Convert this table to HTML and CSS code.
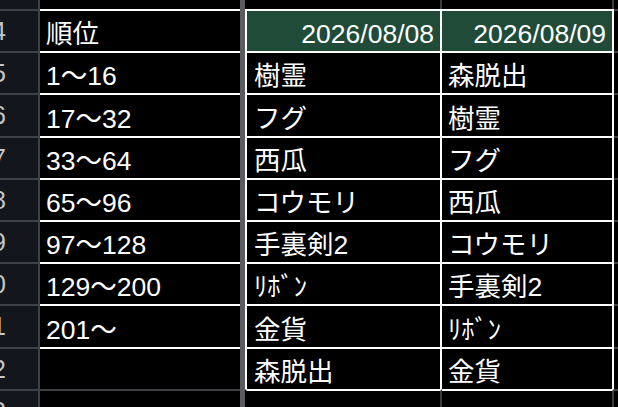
FILE: index.html
```html
<!DOCTYPE html>
<html lang="ja">
<head>
<meta charset="utf-8">
<title>Sheet</title>
<link rel="stylesheet" href="styles.css">
</head>
<body>
<div class="sheet">
  <div class="row edge top">
    <div class="hdr"></div>
    <div class="ca"></div><div class="sep"></div><div class="cb"></div><div class="cc"></div><div class="cd"></div>
  </div>
  <div class="row data">
    <div class="hdr"><span>14</span></div>
    <div class="ca">順位</div><div class="sep"></div>
    <div class="cb head">2026/08/08</div><div class="cc head">2026/08/09</div><div class="cd"></div>
  </div>
  <div class="row data">
    <div class="hdr"><span>15</span></div>
    <div class="ca">1〜16</div><div class="sep"></div>
    <div class="cb">樹霊</div><div class="cc">森脱出</div><div class="cd"></div>
  </div>
  <div class="row data">
    <div class="hdr"><span>16</span></div>
    <div class="ca">17〜32</div><div class="sep"></div>
    <div class="cb">フグ</div><div class="cc">樹霊</div><div class="cd"></div>
  </div>
  <div class="row data">
    <div class="hdr"><span>17</span></div>
    <div class="ca">33〜64</div><div class="sep"></div>
    <div class="cb">西瓜</div><div class="cc">フグ</div><div class="cd"></div>
  </div>
  <div class="row data">
    <div class="hdr"><span>18</span></div>
    <div class="ca">65〜96</div><div class="sep"></div>
    <div class="cb">コウモリ</div><div class="cc">西瓜</div><div class="cd"></div>
  </div>
  <div class="row data">
    <div class="hdr"><span>19</span></div>
    <div class="ca">97〜128</div><div class="sep"></div>
    <div class="cb">手裏剣2</div><div class="cc">コウモリ</div><div class="cd"></div>
  </div>
  <div class="row data">
    <div class="hdr"><span>20</span></div>
    <div class="ca">129〜200</div><div class="sep"></div>
    <div class="cb">ﾘﾎﾞﾝ</div><div class="cc">手裏剣2</div><div class="cd"></div>
  </div>
  <div class="row data">
    <div class="hdr"><span>21</span></div>
    <div class="ca">201〜</div><div class="sep"></div>
    <div class="cb">金貨</div><div class="cc">ﾘﾎﾞﾝ</div><div class="cd"></div>
  </div>
  <div class="row data">
    <div class="hdr"><span>22</span></div>
    <div class="ca"></div><div class="sep"></div>
    <div class="cb">森脱出</div><div class="cc">金貨</div><div class="cd"></div>
  </div>
  <div class="row edge bottom">
    <div class="hdr"><span>23</span></div>
    <div class="ca"></div><div class="sep"></div><div class="cb"></div><div class="cc"></div><div class="cd"></div>
  </div>
</div>
</body>
</html>
```

FILE: styles.css
```css
* { box-sizing: border-box; }

html, body {
  margin: 0;
  padding: 0;
  background: #000;
  overflow: hidden;
}

.sheet {
  width: 618px;
  height: 407px;
  overflow: hidden;
  font-family: "Liberation Sans", "Noto Sans CJK JP", sans-serif;
  font-size: 26.5px;
  line-height: 26px;
  color: #ffffff;
}

.row {
  display: grid;
  grid-template-columns: 40px 200px 5px 197px 172px 1fr;
  height: 42.2px;
}

.row.top { height: 9px; }

.row > div {
  display: flex;
  align-items: flex-end;
  overflow: hidden;
  white-space: nowrap;
  padding-bottom: 4px;
}

.hdr {
  background: #13161c;
  border-right: 2px solid #3e4147;
  justify-content: flex-end;
  padding-right: 32px;
  color: #c4c6c8;
  font-size: 25px;
}
.row > .hdr { align-items: center; padding-bottom: 0; }

.ca {
  background: #000;
  padding-left: 6px;
}

.sep { background: #5b5c5f; }

.cb {
  background: #000;
  border-left: 2px solid #000;
  border-right: 2px solid #3c3c3e;
  padding-left: 7px;
}

.cc {
  background: #000;
  border-right: 2px solid #3c3c3e;
  padding-left: 6px;
}

.cd { background: #000; }

.row.data .hdr,
.row.bottom .hdr { border-top: 2px solid #3e4147; }

.row.data .ca,
.row.data .cb,
.row.data .cc,
.row.bottom .cb,
.row.bottom .cc { border-top: 2px solid #ffffff; }

.row.bottom .ca,
.row.data .cd,
.row.bottom .cd { border-top: 2px solid #3f4144; }

.row.data .cb { border-left-color: #ffffff; border-right-color: #ffffff; }
.row.data .cc { border-right-color: #ffffff; }

.head {
  background: #1f4b38;
  justify-content: flex-end;
  padding-right: 6px;
}
.row > .head { padding-left: 0; }
```
